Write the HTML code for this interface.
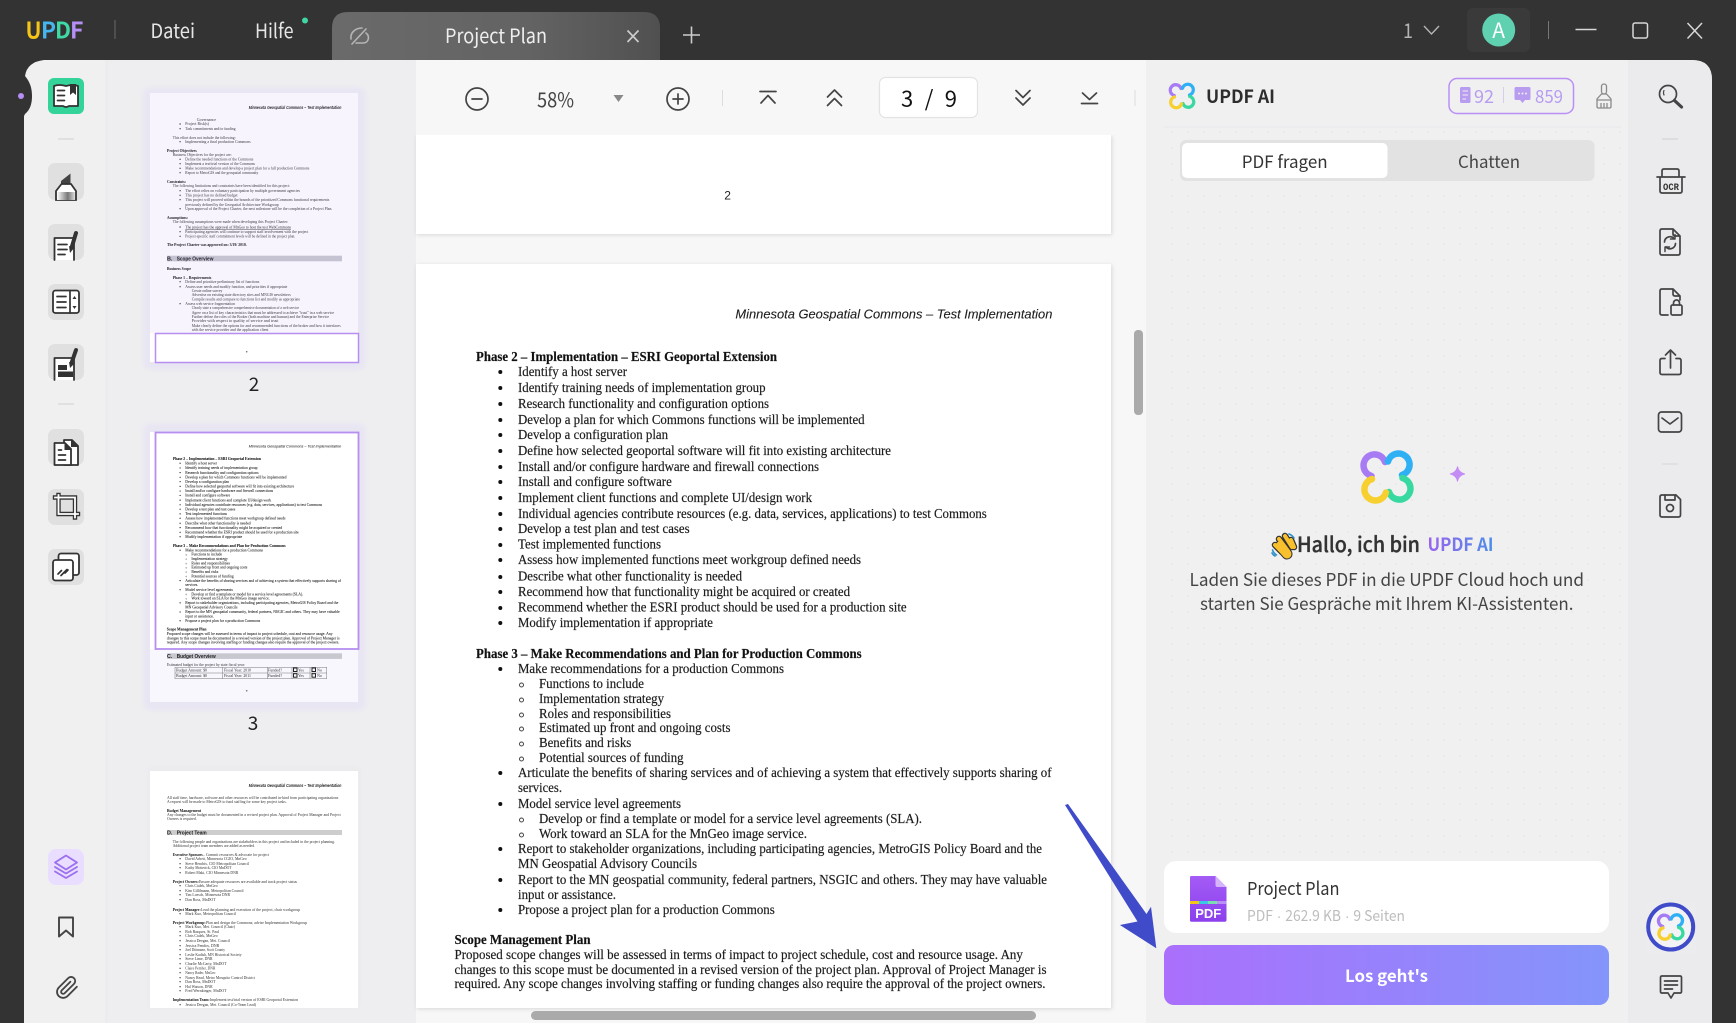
<!DOCTYPE html>
<html lang="de"><head><meta charset="utf-8"><title>UPDF Project Plan</title>
<style>
html,body{margin:0;padding:0;width:1736px;height:1023px;overflow:hidden;background:#333}
svg{display:block}
.u{font-family:"Noto Sans CJK SC","Liberation Sans",sans-serif}
.s{font-family:"Liberation Serif","Times New Roman",serif;font-size:13.5px;fill:#1c1c1c;stroke:#1c1c1c;stroke-width:.18px}
.b{font-weight:bold;fill:#111}
.t{font-family:"Liberation Serif",serif;font-size:4.1px;fill:#333}
.tb{font-family:"Liberation Serif",serif;font-size:4.1px;font-weight:bold;fill:#111}
.th{font-family:"Liberation Sans",sans-serif;font-size:4.2px;font-style:italic;font-weight:bold;fill:#222}
.ts{font-family:"Liberation Sans",sans-serif;font-size:5.4px;font-weight:bold;fill:#222}
.ic{fill:none;stroke:#444;stroke-width:1.7;stroke-linecap:round;stroke-linejoin:round}
.tic{fill:#fff;stroke:#333;stroke-width:1.8;stroke-linejoin:round;stroke-linecap:round}
.tl{fill:none;stroke:#333;stroke-width:1.7;stroke-linecap:round}
.win{fill:none;stroke:#d8d8d8;stroke-width:1.5}
</style></head><body>
<svg width="1736" height="1023" viewBox="0 0 1736 1023" xmlns="http://www.w3.org/2000/svg">
<defs>
<linearGradient id="tab" x1="0" x2="1" y1="0" y2="0"><stop offset="0" stop-color="#6a6a6a"/><stop offset=".6" stop-color="#636363"/><stop offset="1" stop-color="#505050"/></linearGradient>
<linearGradient id="btn" x1="0" x2="1" y1="0" y2="0"><stop offset="0" stop-color="#aa6ffc"/><stop offset="1" stop-color="#8495fb"/></linearGradient>
<linearGradient id="ait" x1="0" x2="1" y1="0" y2="0"><stop offset="0" stop-color="#9a63ee"/><stop offset="1" stop-color="#4d8ee8"/></linearGradient>
<linearGradient id="hl" x1="0" x2="1" y1="0" y2="0"><stop offset="0" stop-color="#fff"/><stop offset=".6" stop-color="#777"/><stop offset="1" stop-color="#ddd"/></linearGradient>
<linearGradient id="pdf" x1="0" x2="0" y1="0" y2="1"><stop offset="0" stop-color="#a45cf6"/><stop offset="1" stop-color="#8b40ec"/></linearGradient>
<filter id="sh" x="-5%" y="-5%" width="110%" height="110%"><feDropShadow dx="1" dy="1" stdDeviation="2" flood-color="#000" flood-opacity=".13"/></filter>
<filter id="bl"><feGaussianBlur stdDeviation="2"/></filter>
<filter id="tbl" x="-2%" y="-2%" width="104%" height="104%"><feGaussianBlur stdDeviation=".3"/></filter>
<pattern id="dots" width="16" height="16" patternUnits="userSpaceOnUse"><circle cx="4" cy="4" r="1" fill="#e8e8ea"/></pattern>
<clipPath id="pg4"><rect x="150" y="771" width="208" height="237"/></clipPath>
<clipPath id="mainclip"><path d="M44 60Q27 62 25 76C30 82 32 88 32 96C32 104 30 110 25 114L24 116V1023H1712V80Q1712 60 1692 60Z"/></clipPath>
<g id="logo" fill="none" stroke-width="6.5" stroke-linecap="round">
<path stroke="#a77bf3" d="M-2-15A11 11 0 1 0-15.5-1"/>
<path stroke="#2fb0f4" d="M15-2A11 11 0 1 0 1-15.5"/>
<path stroke="#38d9a0" d="M2 15A11 11 0 1 0 15.5 1"/>
<path stroke="#f7cf2e" d="M-15 2A11 11 0 1 0-1 15.5"/>
</g>
<g id="doctext">
<text class="s" x="735.4" y="318.5" textLength="317" lengthAdjust="spacingAndGlyphs" style="font-family:'Liberation Sans',sans-serif;font-style:italic;font-size:12.5px;stroke-width:.1px">Minnesota Geospatial Commons – Test Implementation</text>
<text class="s b" x="476" y="361" textLength="301" lengthAdjust="spacingAndGlyphs">Phase 2 – Implementation – ESRI Geoportal Extension</text>
<text class="s" x="518" y="376" textLength="109" lengthAdjust="spacingAndGlyphs">Identify a host server</text>
<text class="s" x="518" y="392" textLength="247.5" lengthAdjust="spacingAndGlyphs">Identify training needs of implementation group</text>
<text class="s" x="518" y="408" textLength="251" lengthAdjust="spacingAndGlyphs">Research functionality and configuration options</text>
<text class="s" x="518" y="424" textLength="346.6" lengthAdjust="spacingAndGlyphs">Develop a plan for which Commons functions will be implemented</text>
<text class="s" x="518" y="439" textLength="150" lengthAdjust="spacingAndGlyphs">Develop a configuration plan</text>
<text class="s" x="518" y="455" textLength="373" lengthAdjust="spacingAndGlyphs">Define how selected geoportal software will fit into existing architecture</text>
<text class="s" x="518" y="471" textLength="301" lengthAdjust="spacingAndGlyphs">Install and/or configure hardware and firewall connections</text>
<text class="s" x="518" y="486" textLength="153.8" lengthAdjust="spacingAndGlyphs">Install and configure software</text>
<text class="s" x="518" y="502" textLength="294" lengthAdjust="spacingAndGlyphs">Implement client functions and complete UI/design work</text>
<text class="s" x="518" y="518" textLength="468.8" lengthAdjust="spacingAndGlyphs">Individual agencies contribute resources (e.g. data, services, applications) to test Commons</text>
<text class="s" x="518" y="533" textLength="171.6" lengthAdjust="spacingAndGlyphs">Develop a test plan and test cases</text>
<text class="s" x="518" y="548.5" textLength="143" lengthAdjust="spacingAndGlyphs">Test implemented functions</text>
<text class="s" x="518" y="564" textLength="343" lengthAdjust="spacingAndGlyphs">Assess how implemented functions meet workgroup defined needs</text>
<text class="s" x="518" y="580.5" textLength="224" lengthAdjust="spacingAndGlyphs">Describe what other functionality is needed</text>
<text class="s" x="518" y="596" textLength="332" lengthAdjust="spacingAndGlyphs">Recommend how that functionality might be acquired or created</text>
<text class="s" x="518" y="611.5" textLength="388.6" lengthAdjust="spacingAndGlyphs">Recommend whether the ESRI product should be used for a production site</text>
<text class="s" x="518" y="627" textLength="195" lengthAdjust="spacingAndGlyphs">Modify implementation if appropriate</text>
<text class="s b" x="476" y="658" textLength="385.7" lengthAdjust="spacingAndGlyphs">Phase 3 – Make Recommendations and Plan for Production Commons</text>
<text class="s" x="518" y="673" textLength="266" lengthAdjust="spacingAndGlyphs">Make recommendations for a production Commons</text>
<text class="s" x="539" y="688" textLength="105" lengthAdjust="spacingAndGlyphs">Functions to include</text>
<text class="s" x="539" y="703" textLength="125" lengthAdjust="spacingAndGlyphs">Implementation strategy</text>
<text class="s" x="539" y="718" textLength="132" lengthAdjust="spacingAndGlyphs">Roles and responsibilities</text>
<text class="s" x="539" y="732" textLength="191.5" lengthAdjust="spacingAndGlyphs">Estimated up front and ongoing costs</text>
<text class="s" x="539" y="747" textLength="92.3" lengthAdjust="spacingAndGlyphs">Benefits and risks</text>
<text class="s" x="539" y="762" textLength="144.6" lengthAdjust="spacingAndGlyphs">Potential sources of funding</text>
<text class="s" x="518" y="777" textLength="533.5" lengthAdjust="spacingAndGlyphs">Articulate the benefits of sharing services and of achieving a system that effectively supports sharing of</text>
<text class="s" x="518" y="792" textLength="44" lengthAdjust="spacingAndGlyphs">services.</text>
<text class="s" x="518" y="808" textLength="163" lengthAdjust="spacingAndGlyphs">Model service level agreements</text>
<text class="s" x="539" y="823" textLength="383" lengthAdjust="spacingAndGlyphs">Develop or find a template or model for a service level agreements (SLA).</text>
<text class="s" x="539" y="838" textLength="268" lengthAdjust="spacingAndGlyphs">Work toward an SLA for the MnGeo image service.</text>
<text class="s" x="518" y="853" textLength="524" lengthAdjust="spacingAndGlyphs">Report to stakeholder organizations, including participating agencies, MetroGIS Policy Board and the</text>
<text class="s" x="518" y="868" textLength="179" lengthAdjust="spacingAndGlyphs">MN Geospatial Advisory Councils</text>
<text class="s" x="518" y="884" textLength="529" lengthAdjust="spacingAndGlyphs">Report to the MN geospatial community, federal partners, NSGIC and others. They may have valuable</text>
<text class="s" x="518" y="899" textLength="98" lengthAdjust="spacingAndGlyphs">input or assistance.</text>
<text class="s" x="518" y="914" textLength="256.7" lengthAdjust="spacingAndGlyphs">Propose a project plan for a production Commons</text>
<text class="s b" x="454.5" y="944" textLength="136" lengthAdjust="spacingAndGlyphs">Scope Management Plan</text>
<text class="s" x="454.5" y="959" textLength="568.4" lengthAdjust="spacingAndGlyphs">Proposed scope changes will be assessed in terms of impact to project schedule, cost and resource usage.  Any</text>
<text class="s" x="454.5" y="974" textLength="592" lengthAdjust="spacingAndGlyphs">changes to this scope must be documented in a revised version of the project plan.  Approval of Project Manager is</text>
<text class="s" x="454.5" y="988" textLength="591" lengthAdjust="spacingAndGlyphs">required. Any scope changes involving staffing or funding changes also require the approval of the project owners.</text>
<g fill="#111"><circle cx="500.3" cy="372" r="2"/><circle cx="500.3" cy="388" r="2"/><circle cx="500.3" cy="404" r="2"/><circle cx="500.3" cy="420" r="2"/><circle cx="500.3" cy="435" r="2"/><circle cx="500.3" cy="451" r="2"/><circle cx="500.3" cy="467" r="2"/><circle cx="500.3" cy="482" r="2"/><circle cx="500.3" cy="498" r="2"/><circle cx="500.3" cy="514" r="2"/><circle cx="500.3" cy="529" r="2"/><circle cx="500.3" cy="545" r="2"/><circle cx="500.3" cy="560" r="2"/><circle cx="500.3" cy="577" r="2"/><circle cx="500.3" cy="592" r="2"/><circle cx="500.3" cy="608" r="2"/><circle cx="500.3" cy="623" r="2"/><circle cx="500.3" cy="669" r="2"/><circle cx="500.3" cy="773" r="2"/><circle cx="500.3" cy="804" r="2"/><circle cx="500.3" cy="849" r="2"/><circle cx="500.3" cy="880" r="2"/><circle cx="500.3" cy="910" r="2"/></g>
<g fill="none" stroke="#444" stroke-width="1"><circle cx="521.5" cy="685" r="2"/><circle cx="521.5" cy="700" r="2"/><circle cx="521.5" cy="715" r="2"/><circle cx="521.5" cy="729" r="2"/><circle cx="521.5" cy="744" r="2"/><circle cx="521.5" cy="759" r="2"/><circle cx="521.5" cy="820" r="2"/><circle cx="521.5" cy="835" r="2"/></g>
</g>
</defs>

<rect width="1736" height="1023" fill="#333"/>

<!-- title bar -->
<g class="u" font-weight="700" font-size="23">
<text x="25.5" y="38.500" fill="#f5c518" textLength="16" lengthAdjust="spacingAndGlyphs">U</text>
<text x="41" y="38.500" fill="#45b7ee" textLength="15" lengthAdjust="spacingAndGlyphs">P</text>
<text x="55" y="38.500" fill="#3fd9a5" textLength="16" lengthAdjust="spacingAndGlyphs">D</text>
<text x="70" y="38.500" fill="#b58ff5" textLength="13.500" lengthAdjust="spacingAndGlyphs">F</text>
</g>
<rect x="114.5" y="20" width="1" height="19" fill="#6a6a6a"/>
<text class="u" x="150.5" y="38" fill="#e6e6e6" font-size="20" textLength="44.5" lengthAdjust="spacingAndGlyphs">Datei</text>
<text class="u" x="255" y="38" fill="#e6e6e6" font-size="20" textLength="38.5" lengthAdjust="spacingAndGlyphs">Hilfe</text>
<circle cx="305" cy="20.5" r="3" fill="#3fd6a4"/>
<path d="M332 60V28Q332 12 348 12H644Q660 12 660 28V60Z" fill="url(#tab)"/>
<g fill="none" stroke="#b5b5b5" stroke-width="1.6" stroke-linecap="round"><path d="M366 29 352 44"/><path d="M351 39c-1-6 4-11 11-11"/><path d="M356 43h7c6 0 7-7 3-10"/></g>
<text class="u" x="445" y="43" fill="#eee" font-size="20" textLength="102" lengthAdjust="spacingAndGlyphs">Project Plan</text>
<path d="M627.5 30.5 638.5 42M638.5 30.5 627.5 42" stroke="#ccc" stroke-width="1.7" fill="none"/>
<path d="M683 35h17M691.5 26.5v17" stroke="#ccc" stroke-width="1.6" fill="none"/>
<text class="u" x="1403" y="38" fill="#b5b5b5" font-size="20" textLength="10" lengthAdjust="spacingAndGlyphs">1</text>
<path d="M1424 26l7.5 8 7.5-8" fill="none" stroke="#b5b5b5" stroke-width="1.4"/>
<rect x="1467" y="8" width="63" height="44" rx="6" fill="#3a3a3a"/>
<circle cx="1498.7" cy="30" r="16.5" fill="#5fd0b0"/>
<text class="u" x="1498.7" y="38" fill="#fff" font-size="21" text-anchor="middle">A</text>
<rect x="1548" y="21" width="1" height="18" fill="#777"/>
<path class="win" d="M1575.5 29.5h21"/>
<rect class="win" x="1633" y="23" width="14.5" height="15" rx="2"/>
<path class="win" d="M1687.5 23 1702 38.5M1702 23 1687.5 38.5"/>

<!-- main panel -->
<g clip-path="url(#mainclip)">
<rect x="0" y="60" width="1736" height="963" fill="#f0f0f0"/>
<rect x="108" y="60" width="308" height="963" fill="#eeeef0"/>
<rect x="416" y="60" width="730" height="963" fill="#f7f7f7"/>
<rect x="1146" y="60" width="482" height="963" fill="#f0f0f1"/>
<rect x="1628" y="60" width="84" height="963" fill="#ebebed"/>
<rect x="105" y="60" width="3" height="963" fill="#ececec"/>
</g>
<circle cx="21" cy="96" r="3" fill="#b58ff5"/>

<!-- left tools -->
<rect x="48" y="78" width="36" height="36" rx="6" fill="#34d399"/>
<path class="tic" d="M54 86q5-2 12 0q7-2 12 0v20h-9q-3 2-6 0H54Z" stroke="#222"/>
<path d="M70 84h6v11l-3-2.500-3 2.500Z" fill="#333"/>
<path class="tl" d="M57.500 90.500h7M57.500 95.500h7M57.500 100.500h7"/>
<rect x="58" y="138.500" width="16" height="1" fill="#cfcfcf"/>
<g fill="#e0e0e0"><rect x="48" y="163" width="36" height="37" rx="7"/><rect x="48" y="224" width="36" height="36" rx="7"/><rect x="48" y="284" width="36" height="36" rx="7"/><rect x="48" y="344" width="36" height="36" rx="7"/><rect x="48" y="429" width="36" height="36" rx="7"/><rect x="48" y="489" width="36" height="36" rx="7"/><rect x="48" y="549" width="36" height="36" rx="7"/></g>
<!-- highlighter -->
<path d="M61 181 70.500 173.500V184H61Z" fill="#444"/>
<path d="M56 191 61.500 184H71L76 191V200H56Z" fill="#fff" stroke="#333" stroke-width="1.800"/>
<rect x="57" y="192" width="18" height="8" fill="url(#hl)"/>
<!-- edit -->
<path class="tic" d="M54.500 260V238H74V260"/>
<path class="tl" d="M58 244.500h9M58 249.500h9M58 254.500h7"/>
<path d="M76 233 71.500 248" stroke="#333" stroke-width="4" stroke-linecap="round"/>
<path d="M69 246l5 2-4 5Z" fill="#333"/>
<!-- page -->
<rect class="tic" x="53" y="290.500" width="26" height="22.500" rx="2.500"/>
<path class="tl" d="M70 291v22M57 296.500h9M57 302h9M57 307.500h9"/>
<path d="M74.500 296l-2 3h4ZM74.500 309l-2-3h4Z" fill="#333"/>
<!-- form -->
<path class="tic" d="M54.500 380V358H74V380"/>
<rect x="58" y="365" width="9" height="5" fill="#333"/><rect x="58" y="371.500" width="15" height="5.500" fill="#333"/>
<path d="M76 350 71.500 363" stroke="#333" stroke-width="4" stroke-linecap="round"/>
<path d="M69 362l5 2-4 4Z" fill="#333"/>
<rect x="58" y="403.500" width="16" height="1" fill="#cfcfcf"/>
<!-- organize -->
<path class="tic" d="M64 440h8l6 6v19H64Z"/>
<path d="M71 439.500l7.500 7.500h-7.500Z" fill="#333"/>
<path class="tic" d="M54.500 465V443H65L71 449V465Z"/>
<path d="M64.500 443l7 7h-7Z" fill="#333"/>
<path class="tl" d="M58.500 450h3M58.500 455h7M58.500 460h7"/>
<!-- crop -->
<g fill="none" stroke-linecap="square" stroke-linejoin="miter">
<path d="M58.500 495V514H78M55 497.500H75V517.500" stroke="#333" stroke-width="4.400"/>
<path d="M58.500 495V514H78M55 497.500H75V517.500" stroke="#fff" stroke-width="1.800"/>
</g>
<!-- combine -->
<rect class="tic" x="58.500" y="553.500" width="20.500" height="21.500" rx="2.500"/>
<rect class="tic" x="53" y="560" width="20" height="20.500" rx="2.500" stroke-width="2"/>
<path class="tl" d="M58 574l3.500-3.500M61 575.500l6-6M65 573l3-3" stroke-width="2"/>
<!-- layers -->
<rect x="48" y="849" width="36" height="36" rx="8" fill="#e9deff"/>
<g fill="none" stroke="#9b6ff0" stroke-width="1.800" stroke-linejoin="round" stroke-linecap="round"><path d="M66 855.500 77 862.500 66 869.500 55 862.500Z"/><path d="M55 867 66 873.500 77 867"/><path d="M55 871.500 66 878 77 871.500"/></g>
<path d="M59 917.500h14v19l-7-6-7 6Z" fill="none" stroke="#444" stroke-width="1.900" stroke-linejoin="round"/>
<path transform="translate(55 975.500) scale(1.020)" fill="none" stroke="#444" stroke-width="1.800" stroke-linecap="round" stroke-linejoin="round" d="M21.440 11.050l-9.190 9.190a6 6 0 0 1-8.490-8.490l9.190-9.190a4 4 0 0 1 5.660 5.660l-9.200 9.190a2 2 0 0 1-2.830-2.830l8.490-8.480"/>

<!-- thumbnails -->
<rect x="143" y="87" width="223" height="283" rx="8" fill="#e8e6f3" filter="url(#bl)"/>
<rect x="150" y="93" width="208" height="269" fill="#fff"/>
<g filter="url(#tbl)">
<text class="th" x="248.700" y="109" textLength="92.700" lengthAdjust="spacingAndGlyphs">Minnesota Geospatial Commons – Test Implementation</text>
<text class="t" x="196.700" y="121.200" textLength="19.300" lengthAdjust="spacingAndGlyphs">Governance</text>
<text class="t" x="185.300" y="125.200" textLength="23.700" lengthAdjust="spacingAndGlyphs">Project Risk(s)</text>
<text class="t" x="185.300" y="129.900" textLength="50.300" lengthAdjust="spacingAndGlyphs">Task commitments and/or funding</text>
<text class="t" x="172.700" y="138.900" textLength="63" lengthAdjust="spacingAndGlyphs">This effort does not include the following:</text>
<text class="t" x="185.300" y="142.900" textLength="65.300" lengthAdjust="spacingAndGlyphs">Implementing a final production Commons</text>
<text class="tb" x="167" y="151.900" textLength="29.700" lengthAdjust="spacingAndGlyphs">Project Objectives</text>
<text class="t" x="172.700" y="155.900" textLength="59" lengthAdjust="spacingAndGlyphs">Business Objectives for the project are:</text>
<text class="t" x="185.300" y="160.500" textLength="68" lengthAdjust="spacingAndGlyphs">Define the needed functions of the Commons</text>
<text class="t" x="185.300" y="164.900" textLength="69.700" lengthAdjust="spacingAndGlyphs">Implement a test/trial version of the Commons</text>
<text class="t" x="185.300" y="169.500" textLength="124" lengthAdjust="spacingAndGlyphs">Make recommendations and develop a project plan for a full production Commons</text>
<text class="t" x="185.300" y="173.900" textLength="73" lengthAdjust="spacingAndGlyphs">Report to MetroGIS and the geospatial community</text>
<text class="tb" x="167" y="182.900" textLength="19" lengthAdjust="spacingAndGlyphs">Constraints:</text>
<text class="t" x="172.700" y="187.200" textLength="117.300" lengthAdjust="spacingAndGlyphs">The following limitations and constraints have been identified for this project:</text>
<text class="t" x="185.300" y="191.900" textLength="114.700" lengthAdjust="spacingAndGlyphs">The effort relies on voluntary participation by multiple government agencies</text>
<text class="t" x="185.300" y="196.500" textLength="52.300" lengthAdjust="spacingAndGlyphs">This project has no defined budget</text>
<text class="t" x="185.300" y="200.900" textLength="144" lengthAdjust="spacingAndGlyphs">This project will proceed within the bounds of the prioritized Commons functional requirements</text>
<text class="t" x="185.300" y="205.900" textLength="93.300" lengthAdjust="spacingAndGlyphs">previously defined by the Geospatial Architecture Workgroup</text>
<text class="t" x="185.300" y="209.900" textLength="147" lengthAdjust="spacingAndGlyphs">Upon approval of the Project Charter, the next milestone will be the completion of a Project Plan.</text>
<text class="tb" x="167" y="218.900" textLength="21" lengthAdjust="spacingAndGlyphs">Assumptions:</text>
<text class="t" x="172.700" y="222.900" textLength="115.700" lengthAdjust="spacingAndGlyphs">The following assumptions were made when developing this Project Charter:</text>
<text class="t" x="185.300" y="228.400" textLength="105.700" lengthAdjust="spacingAndGlyphs" style="text-decoration:underline;fill:#222">The project has the approval of MnGeo to host the test WebCommons</text>
<text class="t" x="185.300" y="232.900" textLength="123" lengthAdjust="spacingAndGlyphs">Participating agencies will continue to support staff involvement with the project</text>
<text class="t" x="185.300" y="237.500" textLength="110" lengthAdjust="spacingAndGlyphs">Project-specific staff commitment levels will be defined in the project plan.</text>
<text class="tb" x="167" y="245.900" textLength="79.700" lengthAdjust="spacingAndGlyphs">The Project Charter was approved on: 3/19/ 2010.</text>
<rect x="167" y="255.700" width="175" height="5.600" fill="#c8c8d0"/>
<text class="ts" x="167" y="260.400">B.</text><text class="ts" x="176.700" y="260.400" textLength="36.700" lengthAdjust="spacingAndGlyphs">Scope Overview</text>
<text class="tb" x="167" y="269.900" textLength="24" lengthAdjust="spacingAndGlyphs">Business Scope</text>
<text class="tb" x="172.700" y="278.900" textLength="38.700" lengthAdjust="spacingAndGlyphs">Phase 1 – Requirements</text>
<text class="t" x="185.300" y="282.900" textLength="74" lengthAdjust="spacingAndGlyphs">Define and prioritize preliminary list of functions</text>
<text class="t" x="185.300" y="287.900" textLength="102" lengthAdjust="spacingAndGlyphs">Assess user needs and modify function, and priorities if appropriate</text>
<text class="t" x="191.700" y="291.900" textLength="30.700" lengthAdjust="spacingAndGlyphs">Create online survey</text>
<text class="t" x="191.700" y="296.200" textLength="99" lengthAdjust="spacingAndGlyphs">Advertise on existing state directory sites and MNGIS newsletters</text>
<text class="t" x="191.700" y="300.500" textLength="108.300" lengthAdjust="spacingAndGlyphs">Compile results and compare to functions list and modify as appropriate</text>
<text class="t" x="185.300" y="304.900" textLength="49.700" lengthAdjust="spacingAndGlyphs">Assess web service fragmentation</text>
<text class="t" x="191.700" y="309.200" textLength="107.300" lengthAdjust="spacingAndGlyphs">Clearly state a comprehensive comprehensive documentation of a web service</text>
<text class="t" x="191.700" y="313.900" textLength="142.300" lengthAdjust="spacingAndGlyphs">Agree on a list of key characteristics that must be addressed to achieve "trust" in a web service</text>
<text class="t" x="191.700" y="317.900" textLength="137.300" lengthAdjust="spacingAndGlyphs">Further define the roles of the Broker (both machine and human) and the Enterprise Service</text>
<text class="t" x="191.700" y="321.900" textLength="86.700" lengthAdjust="spacingAndGlyphs">Provider with respect to quality of service and trust</text>
<text class="t" x="191.700" y="326.900" textLength="149" lengthAdjust="spacingAndGlyphs">Make clearly define the options for and recommended functions of the broker and how it interfaces</text>
<text class="t" x="191.700" y="330.900" textLength="76.700" lengthAdjust="spacingAndGlyphs">with the service provider and the application client</text>
<path stroke="#333" stroke-width="1.200" fill="none" d="M179.500 124h1.200M179.500 128.700h1.200M179.500 141.700h1.200M179.500 159.300h1.200M179.500 163.700h1.200M179.500 168.300h1.200M179.500 172.700h1.200M179.500 190.700h1.200M179.500 195.300h1.200M179.500 199.700h1.200M179.500 208.700h1.200M179.500 227h1.200M179.500 231.700h1.200M179.500 236.300h1.200M179.500 281.700h1.200M179.500 286.700h1.200M179.500 303.700h1.200"/>
</g>
<rect x="150" y="93" width="208" height="240" fill="#a888ee" opacity=".09"/>
<rect x="155.500" y="333.500" width="203" height="29" fill="#fff" stroke="#b68ff0" stroke-width="1.500"/>
<circle cx="246.700" cy="351.700" r=".8" fill="#777"/>
<text class="u" x="254" y="391" fill="#222" font-size="19" text-anchor="middle">2</text>

<rect x="143" y="423" width="223" height="288" rx="8" fill="#e9e6f3" filter="url(#bl)"/>
<rect x="150" y="432" width="208" height="270" fill="#fff"/>
<g filter="url(#tbl)"><g transform="translate(34 354.300) scale(.292 .2928)"><use href="#doctext"/></g></g>
<rect x="150" y="649" width="208" height="53" fill="#a888ee" opacity=".07"/>
<rect x="155.500" y="432.500" width="203" height="216.500" fill="none" stroke="#b68ff0" stroke-width="1.800"/>
<rect x="167" y="653.300" width="175" height="5.600" fill="#c8c8d0"/>
<text class="ts" x="167" y="658">C.</text><text class="ts" x="176.700" y="658" textLength="39" lengthAdjust="spacingAndGlyphs">Budget Overview</text>
<text class="t" x="167" y="666.200" textLength="78" lengthAdjust="spacingAndGlyphs">Estimated budget for the project by state fiscal year:</text>
<g fill="none" stroke="#777" stroke-width=".5"><rect x="175" y="667.300" width="151.700" height="11.400"/><path d="M175 673h151.700M222.300 667.300v11.400M267.300 667.300v11.400M292 667.300v11.400M310 667.300v11.400"/></g>
<text class="t" x="176" y="671.500" textLength="31" lengthAdjust="spacingAndGlyphs">Budget Amount: $0</text>
<text class="t" x="224" y="671.500" textLength="27" lengthAdjust="spacingAndGlyphs">Fiscal Year: 2010</text>
<text class="t" x="268" y="671.500">Funded?</text>
<text class="t" x="176" y="676.900" textLength="31" lengthAdjust="spacingAndGlyphs">Budget Amount: $0</text>
<text class="t" x="224" y="676.900" textLength="27" lengthAdjust="spacingAndGlyphs">Fiscal Year: 2011</text>
<text class="t" x="268" y="676.900">Funded?</text>
<g fill="none" stroke="#222" stroke-width="1"><rect x="293.500" y="668" width="3.500" height="3.500"/><rect x="312" y="668" width="3.500" height="3.500"/><rect x="293.500" y="673.700" width="3.500" height="3.500"/><rect x="312" y="673.700" width="3.500" height="3.500"/></g>
<text class="t" x="298" y="671.500">Yes</text><text class="t" x="317" y="671.500">No</text><text class="t" x="298" y="677">Yes</text><text class="t" x="317" y="677">No</text>
<circle cx="246.700" cy="690.700" r=".8" fill="#777"/>
<text class="u" x="253" y="730" fill="#222" font-size="19" text-anchor="middle">3</text>

<rect x="148" y="767" width="212" height="241" fill="#ebebed" filter="url(#bl)"/>
<rect x="150" y="771" width="208" height="237" fill="#fff"/>
<g clip-path="url(#pg4)"><g filter="url(#tbl)">
<text class="th" x="248.700" y="787" textLength="92.700" lengthAdjust="spacingAndGlyphs">Minnesota Geospatial Commons – Test Implementation</text>
<text class="t" x="167" y="798.900" textLength="171.300" lengthAdjust="spacingAndGlyphs">All staff time, hardware, software and other resources will be contributed in-kind from participating organizations</text>
<text class="t" x="167" y="802.900" textLength="119.700" lengthAdjust="spacingAndGlyphs">A request will be made to MetroGIS to fund staffing for some key project tasks.</text>
<text class="tb" x="167" y="811.900" textLength="34" lengthAdjust="spacingAndGlyphs">Budget Management</text>
<text class="t" x="167" y="815.900" textLength="173.700" lengthAdjust="spacingAndGlyphs">Any changes to the budget must be documented in a revised project plan.  Approval of Project Manager and Project</text>
<text class="t" x="167" y="819.900" textLength="29.700" lengthAdjust="spacingAndGlyphs">Owners is required.</text>
<rect x="167" y="830" width="175" height="5" fill="#cdcdcd"/>
<text class="ts" x="167" y="834.400">D.</text><text class="ts" x="176.700" y="834.400" textLength="30" lengthAdjust="spacingAndGlyphs">Project Team</text>
<text class="t" x="172.700" y="842.900" textLength="162.300" lengthAdjust="spacingAndGlyphs">The following people and organizations are stakeholders in this project and included in the project planning.</text>
<text class="t" x="172.700" y="846.900" textLength="82.300" lengthAdjust="spacingAndGlyphs">Additional project team members are added as needed.</text>
<text class="tb" x="172.700" y="855.900" textLength="30" lengthAdjust="spacingAndGlyphs">Executive Sponsors</text><text class="t" x="203" y="855.900" textLength="66" lengthAdjust="spacingAndGlyphs"> – Commit resources &amp; advocate for project</text>
<text class="t" x="185.300" y="859.900" textLength="61.300" lengthAdjust="spacingAndGlyphs">David Arbeit, Minnesota CGIO, MnGeo</text>
<text class="t" x="185.300" y="864.900" textLength="63.700" lengthAdjust="spacingAndGlyphs">Steve Hendrix, CIO Metropolitan Council</text>
<text class="t" x="185.300" y="868.900" textLength="46.300" lengthAdjust="spacingAndGlyphs">Kathy Motterick, CIO MnDOT</text>
<text class="t" x="185.300" y="873.900" textLength="53" lengthAdjust="spacingAndGlyphs">Robert Maki, CIO Minnesota DNR</text>
<text class="tb" x="172.700" y="882.900" textLength="26" lengthAdjust="spacingAndGlyphs">Project Owners:</text><text class="t" x="199" y="882.900" textLength="98" lengthAdjust="spacingAndGlyphs"> Ensure adequate resources are available and track project status</text>
<text class="t" x="185.300" y="886.900" textLength="32.300" lengthAdjust="spacingAndGlyphs">Chris Cialek, MnGeo</text>
<text class="t" x="185.300" y="891.900" textLength="58.300" lengthAdjust="spacingAndGlyphs">Kim Gillilmann, Metropolitan Council</text>
<text class="t" x="185.300" y="895.900" textLength="44.700" lengthAdjust="spacingAndGlyphs">Tim Loesch, Minnesota DNR</text>
<text class="t" x="185.300" y="900.900" textLength="30.300" lengthAdjust="spacingAndGlyphs">Dan Ross, MnDOT</text>
<text class="tb" x="172.700" y="910.900" textLength="28" lengthAdjust="spacingAndGlyphs">Project Manager:</text><text class="t" x="201" y="910.900" textLength="99" lengthAdjust="spacingAndGlyphs"> Lead the planning and execution of the project, chair workgroup</text>
<text class="t" x="185.300" y="914.900" textLength="50.700" lengthAdjust="spacingAndGlyphs">Mark Kuo, Metropolitan Council</text>
<text class="tb" x="172.700" y="923.900" textLength="33" lengthAdjust="spacingAndGlyphs">Project Workgroup:</text><text class="t" x="206" y="923.900" textLength="101" lengthAdjust="spacingAndGlyphs"> Plan and design the Commons; advise Implementation Workgroup</text>
<text class="t" x="185.300" y="927.900" textLength="49.700" lengthAdjust="spacingAndGlyphs">Mark Kuo, Met. Council (Chair)</text>
<text class="t" x="185.300" y="932.900" textLength="33.700" lengthAdjust="spacingAndGlyphs">Bob Basques, St. Paul</text>
<text class="t" x="185.300" y="936.900" textLength="32.300" lengthAdjust="spacingAndGlyphs">Chris Cialek, MnGeo</text>
<text class="t" x="185.300" y="941.900" textLength="44.700" lengthAdjust="spacingAndGlyphs">Jessica Deegan, Met. Council</text>
<text class="t" x="185.300" y="946.900" textLength="34" lengthAdjust="spacingAndGlyphs">Jessica Fendos, DNR</text>
<text class="t" x="185.300" y="950.900" textLength="39.700" lengthAdjust="spacingAndGlyphs">Joel Dittmann, Scott County</text>
<text class="t" x="185.300" y="955.900" textLength="56.300" lengthAdjust="spacingAndGlyphs">Leslie Kadish, MN Historical Society</text>
<text class="t" x="185.300" y="959.900" textLength="27.300" lengthAdjust="spacingAndGlyphs">Steve Lime, DNR</text>
<text class="t" x="185.300" y="964.900" textLength="41.300" lengthAdjust="spacingAndGlyphs">Charlie McCarty, MnDOT</text>
<text class="t" x="185.300" y="969.500" textLength="30" lengthAdjust="spacingAndGlyphs">Claire Pettifer, DNR</text>
<text class="t" x="185.300" y="973.900" textLength="30" lengthAdjust="spacingAndGlyphs">Nancy Rader, MnGeo</text>
<text class="t" x="185.300" y="978.900" textLength="69.700" lengthAdjust="spacingAndGlyphs">Nancy Read, Metro Mosquito Control District</text>
<text class="t" x="185.300" y="982.900" textLength="30.300" lengthAdjust="spacingAndGlyphs">Dan Ross, MnDOT</text>
<text class="t" x="185.300" y="987.900" textLength="27.300" lengthAdjust="spacingAndGlyphs">Hal Watson, DNR</text>
<text class="t" x="185.300" y="991.900" textLength="41.300" lengthAdjust="spacingAndGlyphs">Fred Wernkinger, MnDOT</text>
<text class="tb" x="172.700" y="1000.900" textLength="37" lengthAdjust="spacingAndGlyphs">Implementation Team:</text><text class="t" x="210" y="1000.900" textLength="88" lengthAdjust="spacingAndGlyphs"> Implement test/trial version of ESRI Geoportal Extension</text>
<text class="t" x="185.300" y="1005.900" textLength="70.700" lengthAdjust="spacingAndGlyphs">Jessica Deegan, Met. Council (Co-Team Lead)</text>
<path stroke="#333" stroke-width="1.200" fill="none" d="M179.500 858.700h1.200M179.500 863.700h1.200M179.500 867.700h1.200M179.500 872.700h1.200M179.500 885.700h1.200M179.500 890.700h1.200M179.500 894.700h1.200M179.500 899.700h1.200M179.500 913.700h1.200M179.500 926.700h1.200M179.500 931.700h1.200M179.500 935.700h1.200M179.500 940.700h1.200M179.500 945.700h1.200M179.500 949.700h1.200M179.500 954.700h1.200M179.500 958.700h1.200M179.500 963.700h1.200M179.500 968.300h1.200M179.500 972.700h1.200M179.500 977.700h1.200M179.500 981.700h1.200M179.500 986.700h1.200M179.500 990.700h1.200M179.500 1004.700h1.200"/>
</g></g>

<!-- PDF pages -->
<rect x="416" y="135" width="695" height="99" fill="#fff" filter="url(#sh)"/>
<text x="727.600" y="199.500" font-family="Liberation Sans,sans-serif" font-size="12" fill="#222" text-anchor="middle">2</text>
<rect x="416" y="264" width="695" height="744" fill="#fff" filter="url(#sh)"/>
<use href="#doctext"/>
<rect x="1134" y="330" width="9" height="85" rx="4" fill="#aaa"/>
<rect x="531" y="1011" width="505" height="9" rx="4.500" fill="#aaa"/>

<!-- toolbar -->
<rect x="416" y="60" width="730" height="75" fill="#f7f7f7"/>
<circle class="ic" cx="477" cy="99" r="11"/><path class="ic" d="M472 99h10"/>
<text class="u" x="537" y="107" fill="#444" font-size="20" textLength="37" lengthAdjust="spacingAndGlyphs">58%</text>
<path d="M613.500 95h10l-5 7Z" fill="#888"/>
<circle class="ic" cx="678" cy="99" r="11"/><path class="ic" d="M673 99h10M678 94v10"/>
<rect x="722" y="90" width="1" height="16" fill="#ddd"/>
<path class="ic" d="M760 91.500h16M761 103l7-7.500 7 7.500"/>
<path class="ic" d="M827.500 97l7-7 7 7M827.500 105.500l7-7 7 7"/>
<rect x="879.500" y="77.500" width="98" height="40" rx="6" fill="#fff" stroke="#e3e3e3" stroke-width="1.200"/>
<text class="u" x="901" y="106.500" fill="#111" font-size="22" textLength="56" lengthAdjust="spacing">3 / 9</text>
<path class="ic" d="M1016 90.500l7 7 7-7M1016 98l7 7 7-7"/>
<path class="ic" d="M1082.500 93l7 6.500 7-6.500M1081.500 103.500h16"/>
<rect x="1134.500" y="90" width="1" height="16" fill="#ddd"/>

<!-- AI panel -->
<rect x="1164" y="127" width="457" height="733" fill="url(#dots)"/>
<rect x="1164" y="126.500" width="457" height="1" fill="#e9e9ea"/>
<use href="#logo" transform="translate(1182 96) scale(.5)"/>
<text class="u" x="1206" y="103" fill="#2d2d2d" font-size="18" font-weight="700" textLength="69" lengthAdjust="spacingAndGlyphs">UPDF AI</text>
<rect x="1449" y="78.500" width="124.500" height="35" rx="8" fill="none" stroke="#b98ff5" stroke-width="1.500"/>
<rect x="1460" y="87" width="10.500" height="16" rx="1.500" fill="#b79cf0"/>
<path d="M1462.500 91h5.500M1462.500 95h5.500M1462.500 99h3.500" stroke="#f0f0f1" stroke-width="1"/>
<text class="u" x="1474" y="103" fill="#b79cf0" font-size="18" textLength="20" lengthAdjust="spacingAndGlyphs">92</text>
<rect x="1503" y="87" width="1" height="16" fill="#d5cdea"/>
<path d="M1516 87h13q1.500 0 1.500 1.500v10q0 1.500-1.500 1.500h-4l-2.500 3-2.500-3h-4q-1.500 0-1.500-1.500v-10q0-1.500 1.500-1.500Z" fill="#b79cf0"/>
<circle cx="1519" cy="93.500" r="1" fill="#f0f0f1"/><circle cx="1522.500" cy="93.500" r="1" fill="#f0f0f1"/><circle cx="1526" cy="93.500" r="1" fill="#f0f0f1"/>
<text class="u" x="1535" y="103" fill="#b79cf0" font-size="18" textLength="28" lengthAdjust="spacingAndGlyphs">859</text>
<g fill="none" stroke="#8a8a8a" stroke-width="1.300"><rect x="1601.500" y="84" width="5" height="10" rx="2.500"/><path d="M1601.500 94 1597 99v7.500q0 1.500 1.500 1.500h11q1.500 0 1.500-1.500V99l-4.500-5Z"/><path d="M1597 100h14M1601 103v5M1604 103v5M1607 103v5"/></g>

<rect x="1180" y="140" width="414.500" height="41" rx="6" fill="#e2e2e2"/>
<rect x="1182" y="143" width="205.500" height="35" rx="5" fill="#fff"/>
<text class="u" x="1241.700" y="168" fill="#333" font-size="17" textLength="86" lengthAdjust="spacingAndGlyphs">PDF fragen</text>
<text class="u" x="1458" y="168" fill="#444" font-size="17" textLength="62" lengthAdjust="spacingAndGlyphs">Chatten</text>

<use href="#logo" transform="translate(1387 477)"/>
<path d="M1457.500 466.500q1.200 6.200 7.500 7.500q-6.300 1.300-7.500 7.500q-1.200-6.200-7.500-7.500q6.300-1.300 7.500-7.500Z" fill="#c48cf5" stroke="#c48cf5" stroke-width=".8"/>
<!-- waving hand -->
<g stroke-linecap="round" fill="none">
<path d="M1279 539l9 12M1285 536l7 11M1291 540l3 7M1275 545l7 7" stroke="#333" stroke-width="6.500"/>
<path d="M1280 546l7 8" stroke="#333" stroke-width="11"/>
<path d="M1279 539l9 12M1285 536l7 11M1291 540l3 7M1275 545l7 7" stroke="#f9c02e" stroke-width="4"/>
<path d="M1280 546l7 8" stroke="#f9c02e" stroke-width="9"/>
<path d="M1272.500 550q1 3 4 5M1272 553q1 2 3 3M1289 534q3 1 5 4" stroke="#2f8fc8" stroke-width="1.600"/>
</g>
<text class="u" x="1297" y="552" fill="#333" stroke="#333" stroke-width=".35" font-size="21" font-weight="500" textLength="123" lengthAdjust="spacingAndGlyphs">Hallo, ich bin</text>
<text class="u" x="1427.500" y="551" fill="url(#ait)" font-size="18" font-weight="700" textLength="66" lengthAdjust="spacingAndGlyphs">UPDF AI</text>
<text class="u" x="1189.500" y="586" fill="#444" font-size="17.500" textLength="394.500" lengthAdjust="spacingAndGlyphs">Laden Sie dieses PDF in die UPDF Cloud hoch und</text>
<text class="u" x="1200" y="610" fill="#444" font-size="17.500" textLength="373.500" lengthAdjust="spacingAndGlyphs">starten Sie Gespräche mit Ihrem KI-Assistenten.</text>

<rect x="1164" y="861" width="445" height="72" rx="12" fill="#fff"/>
<path d="M1191.500 876h24l11 11v33q0 1.700-1.700 1.700h-33.300q-1.500 0-1.500-1.500v-43q0-1.200 1.500-1.200Z" fill="url(#pdf)"/>
<path d="M1215.500 876l11 11h-9q-2 0-2-2Z" fill="#d6b4fa"/>
<rect x="1190" y="901" width="9" height="3" fill="#f5c518"/><rect x="1199" y="901" width="9" height="3" fill="#38c7e8"/><rect x="1208" y="901" width="9" height="3" fill="#7adfb0"/><rect x="1217" y="901" width="9.400" height="3" fill="#b98ff5"/>
<text x="1208.200" y="918" font-family="Liberation Sans,sans-serif" font-weight="bold" font-size="13" fill="#fff" text-anchor="middle">PDF</text>
<text class="u" x="1247" y="895" fill="#333" font-size="18" textLength="92.500" lengthAdjust="spacingAndGlyphs">Project Plan</text>
<text class="u" x="1247" y="921" fill="#bdbdbd" font-size="15" textLength="158" lengthAdjust="spacingAndGlyphs">PDF<tspan font-family="Liberation Sans,sans-serif"> · </tspan>262.9 KB<tspan font-family="Liberation Sans,sans-serif"> · </tspan>9 Seiten</text>
<rect x="1164" y="945" width="445" height="60" rx="10" fill="url(#btn)"/>
<text class="u" x="1345" y="982" fill="#fff" font-size="17" font-weight="700" textLength="83" lengthAdjust="spacingAndGlyphs">Los geht's</text>

<!-- right tools -->
<g class="ic" stroke="#3d3d3d">
<circle cx="1668" cy="94" r="8.500"/><path d="M1664 90.500q-1 2 0 4.500" stroke-width="1.200"/>
<path d="M1674.500 100.500 1681.500 107" stroke-width="3.200"/>
<path d="M1662 177v-6q0-2 2-2h13q2 0 2 2v6M1657 177h28M1660 178v13q0 2 2 2h18q2 0 2-2v-13"/>
<path d="M1662 229h11l7 7v17q0 2-2 2h-16q-2 0-2-2v-22q0-2 2-2ZM1673 229v5q0 2 2 2h5"/>
<path d="M1664.500 242a5.500 5.500 0 0 1 9.500-3.500M1675.500 243.500a5.500 5.500 0 0 1-9.500 3.500"/>
<path d="M1675 234.500v4.500h-4.500M1665 251.500V247h4.500" stroke-width="1.500"/>
<path d="M1668 315h-6q-2 0-2-2v-22q0-2 2-2h11l7 7v4M1673 289v5q0 2 2 2h5"/>
<rect x="1671" y="305" width="11" height="10" rx="1.500"/><path d="M1673.500 305v-2a3 3 0 0 1 6 0v2"/>
<path d="M1665 358.500h-3q-2 0-2 2v12q0 2 2 2h17q2 0 2-2v-12q0-2-2-2h-3M1670.500 368v-17.500M1665.500 355l5-5 5 5"/>
<rect x="1658.500" y="412" width="23" height="20" rx="3"/><path d="M1662 418l8 6 8-6"/>
<path d="M1662 495h14l4.500 4.500V515q0 2-2 2H1662q-2 0-2-2v-18q0-2 2-2Z"/><path d="M1665 495v5h10v-5"/><circle cx="1670" cy="508" r="3.500"/>
</g>
<rect x="1662" y="138.500" width="16" height="1" fill="#cfcfcf"/>
<rect x="1662" y="463.500" width="16" height="1" fill="#d5d5d5"/>
<text x="1671" y="190" font-family="Liberation Mono,monospace" font-weight="bold" font-size="10" fill="#333" text-anchor="middle" textLength="16" lengthAdjust="spacingAndGlyphs">OCR</text>
<rect x="1646" y="903" width="50" height="50" fill="#ececee"/>
<circle cx="1670.700" cy="927" r="22.500" fill="#f3f3f6" stroke="#3f4bc8" stroke-width="4"/>
<use href="#logo" transform="translate(1670.700 927) scale(.52)"/>
<path class="ic" stroke="#3d3d3d" d="M1662 976h18q1.500 0 1.500 1.500v14q0 1.500-1.500 1.500h-6l-3 5-3-5h-6q-1.500 0-1.500-1.500v-14q0-1.500 1.500-1.500ZM1664.500 981h13M1664.500 985h13M1664.500 989h8"/>

<!-- annotation arrow -->
<path d="M1065 805 1068 804 1146.500 914 1151 906.700 1156.300 948.300 1119.900 925 1137.500 921.500Z" fill="#3f4bc8"/>
</svg>
</body></html>
